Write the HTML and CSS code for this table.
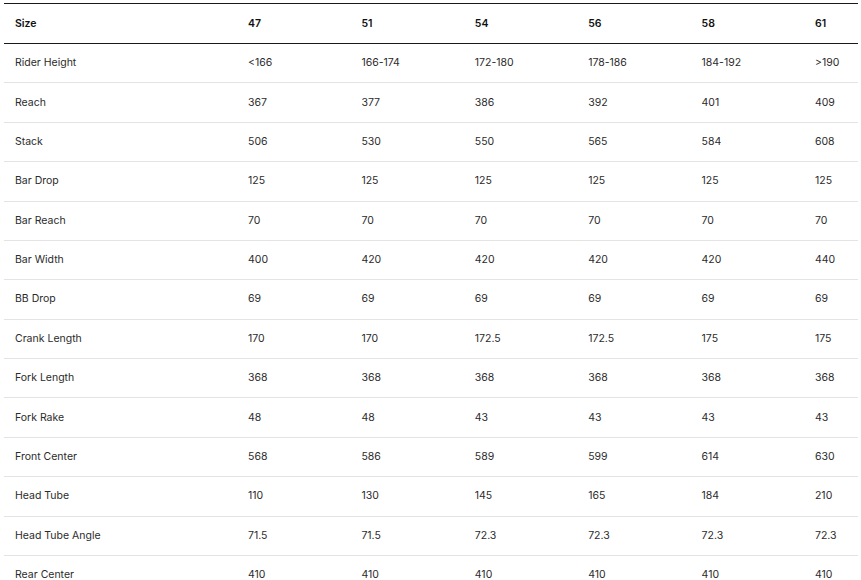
FILE: index.html
```html
<!DOCTYPE html>
<html lang="en">
<head>
<meta charset="utf-8">
<title>Geometry</title>
<link rel="stylesheet" href="styles.css">
</head>
<body>
<div class="wrap">
<table class="geo">
<colgroup><col class="c-label"><col class="c-size"><col class="c-size"><col class="c-size"><col class="c-size"><col class="c-size"><col class="c-size"></colgroup>
<thead>
<tr><th>Size</th><th>47</th><th>51</th><th>54</th><th>56</th><th>58</th><th>61</th></tr>
</thead>
<tbody>
<tr><td>Rider Height</td><td>&lt;166</td><td>166-174</td><td>172-180</td><td>178-186</td><td>184-192</td><td>&gt;190</td></tr>
<tr><td>Reach</td><td>367</td><td>377</td><td>386</td><td>392</td><td>401</td><td>409</td></tr>
<tr><td>Stack</td><td>506</td><td>530</td><td>550</td><td>565</td><td>584</td><td>608</td></tr>
<tr><td>Bar Drop</td><td>125</td><td>125</td><td>125</td><td>125</td><td>125</td><td>125</td></tr>
<tr><td>Bar Reach</td><td>70</td><td>70</td><td>70</td><td>70</td><td>70</td><td>70</td></tr>
<tr><td>Bar Width</td><td>400</td><td>420</td><td>420</td><td>420</td><td>420</td><td>440</td></tr>
<tr><td>BB Drop</td><td>69</td><td>69</td><td>69</td><td>69</td><td>69</td><td>69</td></tr>
<tr><td>Crank Length</td><td>170</td><td>170</td><td>172.5</td><td>172.5</td><td>175</td><td>175</td></tr>
<tr><td>Fork Length</td><td>368</td><td>368</td><td>368</td><td>368</td><td>368</td><td>368</td></tr>
<tr><td>Fork Rake</td><td>48</td><td>48</td><td>43</td><td>43</td><td>43</td><td>43</td></tr>
<tr><td>Front Center</td><td>568</td><td>586</td><td>589</td><td>599</td><td>614</td><td>630</td></tr>
<tr><td>Head Tube</td><td>110</td><td>130</td><td>145</td><td>165</td><td>184</td><td>210</td></tr>
<tr><td>Head Tube Angle</td><td>71.5</td><td>71.5</td><td>72.3</td><td>72.3</td><td>72.3</td><td>72.3</td></tr>
<tr><td>Rear Center</td><td>410</td><td>410</td><td>410</td><td>410</td><td>410</td><td>410</td></tr>
</tbody>
</table>
</div>
</body>
</html>
```

FILE: styles.css
```css
html, body {
  margin: 0;
  padding: 0;
  background: #fff;
}
body {
  font-family: Inter, "Noto Sans", sans-serif;
  color: #2b2b2b;
}
.wrap {
  margin: 3px 3px 0 4px;
  overflow: hidden;
}
.geo {
  border-collapse: collapse;
  table-layout: fixed;
  width: 913px;
  font-size: 10.5px;
}
.c-label { width: 233px; }
.c-size { width: 113.4px; }
.geo th,
.geo td {
  text-align: left;
  padding: 11.2px 0 11.2px 11px;
  line-height: 16px;
  white-space: nowrap;
}
.geo th {
  font-weight: 600;
  color: #111;
  border-top: 1px solid #1a1a1a;
  border-bottom: 1px solid #1a1a1a;
  padding-top: 11.5px;
  padding-bottom: 11.5px;
}
.geo td {
  font-weight: 400;
  border-bottom: 1px solid #e3e3e3;
}
```
